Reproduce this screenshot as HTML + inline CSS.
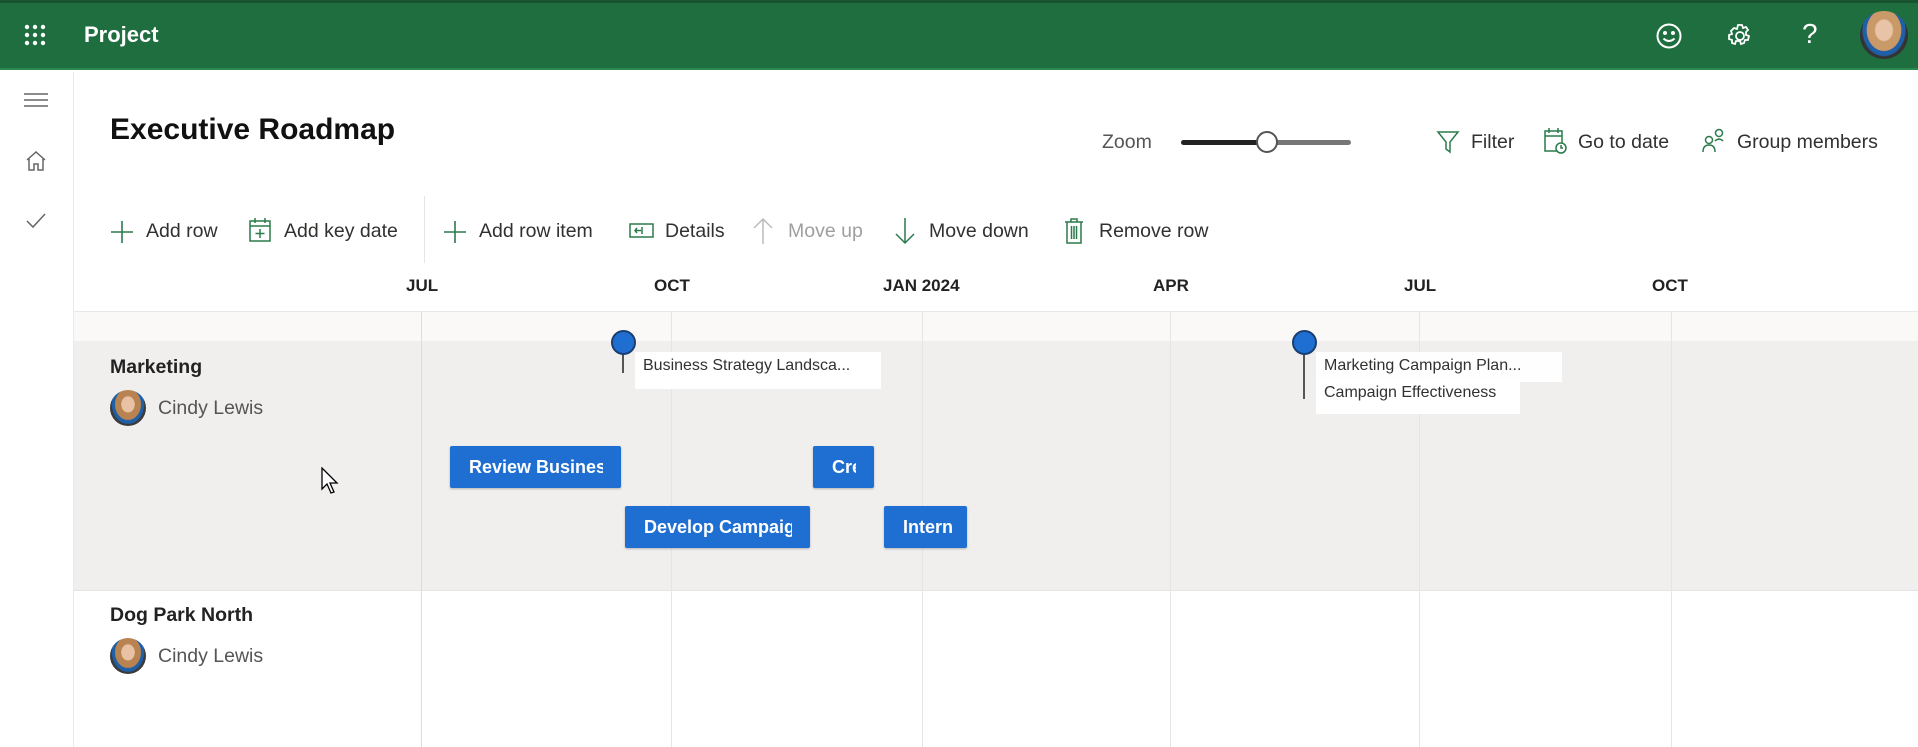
<!DOCTYPE html>
<html><head><meta charset="utf-8"><style>
*{margin:0;padding:0;box-sizing:border-box}
body{width:1918px;height:747px;overflow:hidden;background:#fff;font-family:"Liberation Sans",sans-serif;color:#323130;position:relative}
.a{position:absolute}
.hdr{left:0;top:0;width:1918px;height:70px;background:#1e6e40;border-top:3px solid #17532f;border-bottom:2px solid #2b8a52}
.t{position:absolute;white-space:nowrap}
.tb{font-size:19.5px;color:#323130}
.vl{position:absolute;width:1px;background:#e6e5e4}
.bar{position:absolute;height:42px;background:#1f6fd3;border-radius:2px;box-shadow:0 1px 2px rgba(0,0,0,.25)}
.bar span{position:absolute;left:19px;top:0;bottom:0;overflow:hidden;color:#fff;font-weight:bold;font-size:18px;line-height:42px;white-space:nowrap}
.lab{position:absolute;background:#fff;font-size:16px;color:#323130;padding-left:8px;white-space:nowrap}
.av{position:absolute;width:36px;height:36px;border-radius:50%;background:radial-gradient(ellipse at 50% 40%,#e9c2a5 0 25%,#b88350 28% 50%,#1f5fa8 52% 62%,#3a3a3a 65%);}
</style></head><body>
<div class="a hdr"></div>
<svg class="a" style="left:24px;top:24px" width="24" height="24" fill="#fff"><circle cx="3" cy="3" r="2.2"/><circle cx="11" cy="3" r="2.2"/><circle cx="19" cy="3" r="2.2"/><circle cx="3" cy="11" r="2.2"/><circle cx="11" cy="11" r="2.2"/><circle cx="19" cy="11" r="2.2"/><circle cx="3" cy="19" r="2.2"/><circle cx="11" cy="19" r="2.2"/><circle cx="19" cy="19" r="2.2"/></svg>
<div class="t" style="left:84px;top:22px;color:#fff;font-size:22px;font-weight:bold">Project</div>
<svg class="a" style="left:1655px;top:22px" width="28" height="28" fill="none" stroke="#fff" stroke-width="2"><circle cx="14" cy="14" r="11.5"/><circle cx="10" cy="11" r="1" fill="#fff"/><circle cx="18" cy="11" r="1" fill="#fff"/><path d="M8.5 16.5q5.5 5 11 0"/></svg>
<svg class="a" style="left:1726px;top:22px" width="28" height="28" fill="none" stroke="#fff" stroke-width="1.8"><path d="M12 3h4l1 3 3-1 2 3-2 2 0 3 3 1-1 4-3 0-1 3-3 1-1-3-4 0-1 3-3-1 0-3-3-1 0-4 3-1-1-3 3-3 3 1z"/><circle cx="14" cy="14" r="4"/></svg>
<div class="t" style="left:1802px;top:18px;color:#fff;font-size:28px">?</div>
<div class="a" style="left:1860px;top:11px;width:48px;height:48px;border-radius:50%;background:radial-gradient(ellipse at 50% 40%,#e8c3a8 0 25%,#c99a68 28% 50%,#1f5fa8 52% 62%,#333 65%)"></div>
<div class="a" style="left:0;top:72px;width:74px;height:675px;border-right:1px solid #eaeaea"></div>
<svg class="a" style="left:24px;top:92px" width="24" height="16" stroke="#666" stroke-width="1.5"><path d="M0 2h24M0 8h24M0 14h24"/></svg>
<svg class="a" style="left:25px;top:150px" width="22" height="22" fill="none" stroke="#666" stroke-width="1.5"><path d="M2 10 11 2l9 8M4 8v12h5v-6h4v6h5V8"/></svg>
<svg class="a" style="left:26px;top:213px" width="20" height="16" fill="none" stroke="#666" stroke-width="1.5"><path d="M1 8l6 6L19 1"/></svg>
<div class="t" style="left:110px;top:113px;font-size:30px;font-weight:bold;color:#111">Executive Roadmap</div>
<div class="t tb" style="left:1102px;top:131px;color:#555">Zoom</div>
<div class="a" style="left:1181px;top:140px;width:86px;height:5px;background:#222;border-radius:3px"></div>
<div class="a" style="left:1267px;top:140px;width:84px;height:5px;background:#777;border-radius:3px"></div>
<div class="a" style="left:1256px;top:131px;width:22px;height:22px;border-radius:50%;background:#fff;border:2px solid #555"></div>
<svg class="a" style="left:1436px;top:130px" width="24" height="24" fill="none" stroke="#2b7a4b" stroke-width="1.5"><path d="M2 2h20l-8 10v10l-4-3v-7z"/></svg>
<div class="t tb" style="left:1471px;top:131px">Filter</div>
<svg class="a" style="left:1543px;top:127px" width="24" height="28" fill="none" stroke="#2b7a4b" stroke-width="1.5"><rect x="2" y="4" width="17" height="20"/><path d="M2 9h17M6 1v5M15 1v5"/><circle cx="18" cy="21" r="5" fill="#fff"/><path d="M18 18v3h2"/></svg>
<div class="t tb" style="left:1578px;top:131px">Go to date</div>
<svg class="a" style="left:1701px;top:128px" width="26" height="26" fill="none" stroke="#2b7a4b" stroke-width="1.5"><circle cx="8" cy="12" r="3.5"/><path d="M2 24q0-7 6-7t6 7"/><circle cx="18" cy="5" r="3.5"/><path d="M14 13q4-4 8 0"/></svg>
<div class="t tb" style="left:1737px;top:131px">Group members</div>
<svg class="a" style="left:110px;top:220px" width="24" height="24" stroke="#2b7a4b" stroke-width="1.6"><path d="M12 1v22M1 12h22"/></svg>
<div class="t tb" style="left:146px;top:220px">Add row</div>
<svg class="a" style="left:248px;top:217px" width="24" height="26" fill="none" stroke="#2b7a4b" stroke-width="1.5"><rect x="2" y="4" width="20" height="20"/><path d="M2 9h20M7 1v5M17 1v5M12 12v9M7.5 16.5h9"/></svg>
<div class="t tb" style="left:284px;top:220px">Add key date</div>
<div class="a" style="left:424px;top:196px;width:1px;height:67px;background:#e5e5e5"></div>
<svg class="a" style="left:443px;top:220px" width="24" height="24" stroke="#2b7a4b" stroke-width="1.6"><path d="M12 1v22M1 12h22"/></svg>
<div class="t tb" style="left:479px;top:220px">Add row item</div>
<svg class="a" style="left:629px;top:222px" width="26" height="18" fill="none" stroke="#2b7a4b" stroke-width="1.5"><rect x="1" y="2" width="23" height="13"/><path d="M13 5v7M6 8.5h6M8 6l-2 2.5 2 2.5"/></svg>
<div class="t tb" style="left:665px;top:220px">Details</div>
<svg class="a" style="left:752px;top:217px" width="22" height="28" fill="none" stroke="#bbb" stroke-width="1.5"><path d="M11 27V2M2 11l9-9 9 9"/></svg>
<div class="t tb" style="left:788px;top:220px;color:#a19f9d">Move up</div>
<svg class="a" style="left:894px;top:217px" width="22" height="28" fill="none" stroke="#2b7a4b" stroke-width="1.5"><path d="M11 1v25M2 17l9 9 9-9"/></svg>
<div class="t tb" style="left:929px;top:220px">Move down</div>
<svg class="a" style="left:1064px;top:217px" width="20" height="28" fill="none" stroke="#2b7a4b" stroke-width="1.5"><path d="M1 5h18M7 5V2h6v3M3 5v21h14V5M7.5 9v13M10 9v13M12.5 9v13"/></svg>
<div class="t tb" style="left:1099px;top:220px">Remove row</div>
<div class="t" style="left:406px;top:276px;font-size:17px;font-weight:bold;color:#222">JUL</div>
<div class="t" style="left:654px;top:276px;font-size:17px;font-weight:bold;color:#222">OCT</div>
<div class="t" style="left:883px;top:276px;font-size:17px;font-weight:bold;color:#222">JAN 2024</div>
<div class="t" style="left:1153px;top:276px;font-size:17px;font-weight:bold;color:#222">APR</div>
<div class="t" style="left:1404px;top:276px;font-size:17px;font-weight:bold;color:#222">JUL</div>
<div class="t" style="left:1652px;top:276px;font-size:17px;font-weight:bold;color:#222">OCT</div>
<div class="a" style="left:74px;top:311px;width:1844px;height:1px;background:#e8e8e8"></div>
<div class="a" style="left:74px;top:312px;width:1844px;height:29px;background:#faf9f8"></div>
<div class="a" style="left:74px;top:341px;width:1844px;height:249px;background:#f0efee"></div>
<div class="a" style="left:74px;top:590px;width:1844px;height:1px;background:#e4e4e4"></div>
<div class="vl" style="left:421px;top:312px;height:435px;background:#ddd"></div>
<div class="vl" style="left:671px;top:312px;height:435px"></div>
<div class="vl" style="left:922px;top:312px;height:435px"></div>
<div class="vl" style="left:1170px;top:312px;height:435px"></div>
<div class="vl" style="left:1419px;top:312px;height:435px"></div>
<div class="vl" style="left:1671px;top:312px;height:435px"></div>
<div class="t" style="left:110px;top:356px;font-size:19.5px;font-weight:bold;color:#222">Marketing</div>
<div class="av" style="left:110px;top:390px"></div>
<div class="t" style="left:158px;top:397px;font-size:19.5px;color:#555">Cindy Lewis</div>
<div class="t" style="left:110px;top:604px;font-size:19.5px;font-weight:bold;color:#222">Dog Park North</div>
<div class="av" style="left:110px;top:638px"></div>
<div class="t" style="left:158px;top:645px;font-size:19.5px;color:#555">Cindy Lewis</div>
<div class="lab" style="left:635px;top:352px;width:246px;height:37px;line-height:28px">Business Strategy Landsca...</div>
<div class="a" style="left:622px;top:342px;width:2px;height:31px;background:#555"></div>
<div class="a" style="left:611px;top:330px;width:25px;height:25px;border-radius:50%;background:#1f6fd3;border:2px solid #1a3f70"></div>
<div class="lab" style="left:1316px;top:380px;width:204px;height:34px;line-height:26px">Campaign Effectiveness</div>
<div class="lab" style="left:1316px;top:352px;width:246px;height:30px;line-height:28px;background:rgba(255,255,255,.9)">Marketing Campaign Plan...</div>
<div class="a" style="left:1303px;top:342px;width:2px;height:57px;background:#555"></div>
<div class="a" style="left:1292px;top:330px;width:25px;height:25px;border-radius:50%;background:#1f6fd3;border:2px solid #1a3f70"></div>
<div class="bar" style="left:450px;top:446px;width:171px"><span style="width:134px">Review Business</span></div>
<div class="bar" style="left:813px;top:446px;width:61px"><span style="width:24px">Create</span></div>
<div class="bar" style="left:625px;top:506px;width:185px"><span style="width:148px">Develop Campaign</span></div>
<div class="bar" style="left:884px;top:506px;width:83px"><span style="width:55px">Intern</span></div>
<svg class="a" style="left:321px;top:467px" width="20" height="28"><path d="M1 1v21l5-5 4 9 3-1-4-9h7z" fill="#fff" stroke="#000" stroke-width="1.3"/></svg>
</body></html>
